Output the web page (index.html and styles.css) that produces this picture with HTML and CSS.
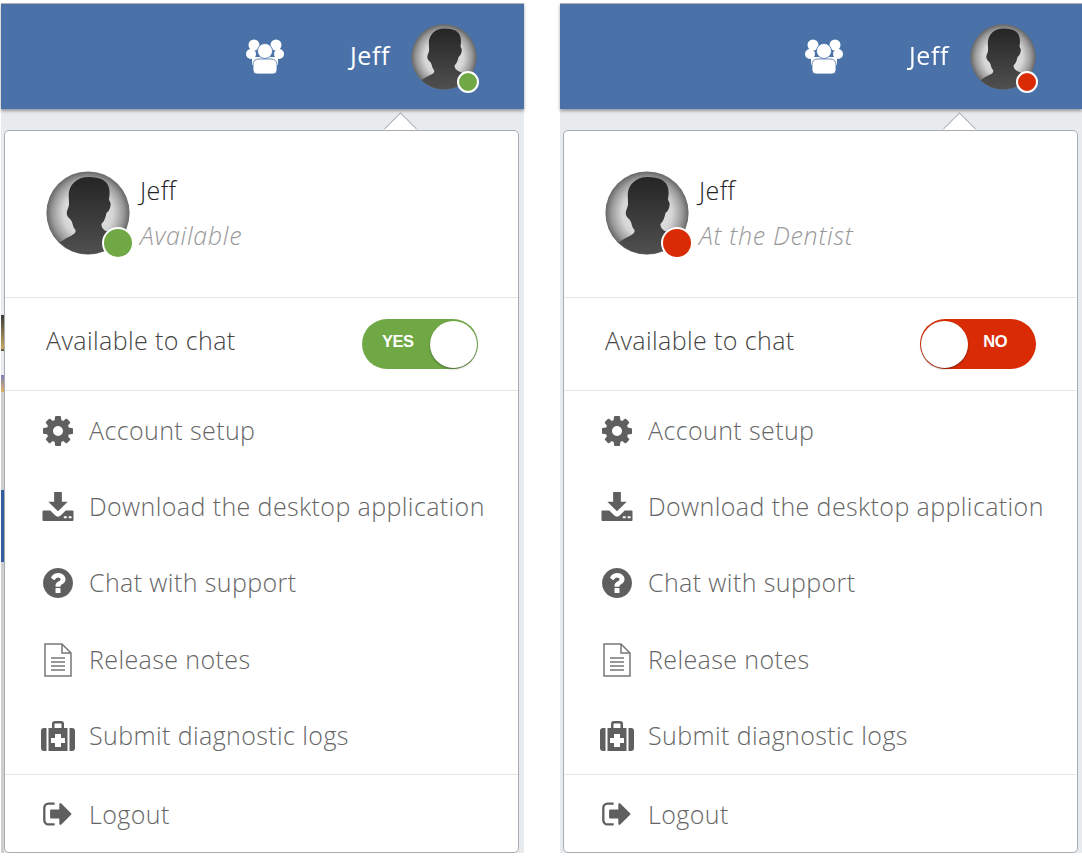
FILE: index.html
```html
<!DOCTYPE html>
<html lang="en">
<head>
  <meta charset="UTF-8" />
  <title>User menu</title>
  <link rel="stylesheet" href="styles.css">
</head>
<body>
  <svg class="defs" width="0" height="0" aria-hidden="true">
    <defs>
      <radialGradient id="avatar-bg" cx="50%" cy="50%" r="50%">
        <stop offset="0" stop-color="#f2f2f2" />
        <stop offset="0.6" stop-color="#d5d5d5" />
        <stop offset="0.85" stop-color="#9a9a9a" />
        <stop offset="1" stop-color="#666" />
      </radialGradient>
      <linearGradient id="avatar-body" x1="0" y1="0" x2="0" y2="1">
        <stop offset="0" stop-color="#252525" />
        <stop offset="1" stop-color="#565656" />
      </linearGradient>
      <clipPath id="avatar-clip"><circle cx="50" cy="50" r="49" /></clipPath>
      <symbol id="avatar" viewBox="0 0 100 100">
        <circle cx="50" cy="50" r="49.500" fill="url(#avatar-bg)" />
        <path clip-path="url(#avatar-clip)" fill="url(#avatar-body)" d="M51 7c-14 0-24 9-24 22 0 5 1 9 0 13-1 4-3 6-2 10 1 4 5 5 6 9 1 4 2 7 4 9 1 3-1 5-5 7-8 4-16 8-19 16l20 20h50l12-30c-5-5-13-8-20-11-5-2-7-5-7-9 4-4 5-8 6-13 3-2 5-6 5-11 0-2-2-3-2-6 1-4 1-9 0-13-2-9-11-13-24-13z" />
      </symbol>
      <symbol id="i-cog" viewBox="128 128 1536 1536">
        <path d="M1152 896q0-106-75-181t-181-75-181 75-75 181 75 181 181 75 181-75 75-181zm512-109v222q0 12-8 23t-20 13l-185 28q-19 54-39 91 35 50 107 138 10 12 10 25t-9 23q-27 37-99 108t-94 71q-12 0-26-9l-138-108q-44 23-91 38-16 136-29 186-7 28-36 28h-222q-14 0-24.500-8.500t-11.500-21.500l-28-184q-49-16-90-37l-141 107q-10 9-25 9-14 0-25-11-126-114-165-168-7-10-7-23 0-12 8-23 15-21 51-66.500t54-70.500q-27-50-41-99l-183-27q-13-2-21-12.500t-8-23.500v-222q0-12 8-23t19-13l186-28q14-46 39-92-40-57-107-138-10-12-10-24 0-10 9-23 26-36 98.500-107.500t94.500-71.500q13 0 26 10l138 107q44-23 91-38 16-136 29-186 7-28 36-28h222q14 0 24.500 8.500t11.500 21.500l28 184q49 16 90 37l142-107q9-9 24-9 13 0 25 10 129 119 165 170 7 8 7 22 0 12-8 23-15 21-51 66.500t-54 70.500q26 50 41 98l183 28q13 2 21 12.500t8 23.500z" />
      </symbol>
      <symbol id="i-download" viewBox="0 0 32 32">
        <path d="M12 1h8v10h6L16 21 6 11h6z" />
        <path d="M1 20h7l5 5q3 3 6 0l5-5h7q1 0 1 1v9q0 1-1 1H1q-1 0-1-1v-9q0-1 1-1zm21 6v2h3v-2zm5 0v2h3v-2z" fill-rule="evenodd" />
      </symbol>
      <symbol id="i-help" viewBox="128 128 1536 1536">
        <path d="M1024 1376v-192q0-14-9-23t-23-9h-192q-14 0-23 9t-9 23v192q0 14 9 23t23 9h192q14 0 23-9t9-23zm256-672q0-88-55.500-163t-138.500-116-170-41q-243 0-371 213-15 24 8 42l132 100q7 6 19 6 16 0 25-12 53-68 86-92 34-24 86-24 48 0 85.500 26t37.500 59q0 38-20 61t-68 45q-63 28-115.500 86.500t-52.500 125.500v36q0 14 9 23t23 9h192q14 0 23-9t9-23q0-19 21.500-49.500t54.500-49.500q32-18 49-28.500t46-35 44.500-48 28-60.500 12.500-81zm384 192q0 209-103 385.500t-279.500 279.500-385.500 103-385.500-103-279.500-279.500-103-385.500 103-385.500 279.500-279.500 385.500-103 385.500 103 279.500 279.500 103 385.500z" />
      </symbol>
      <symbol id="i-file" viewBox="0 0 28 34">
        <path class="line" d="M1 1h17l9 9v23H1zM18 1v9h9" />
        <path class="line" d="M7 15h14M7 19h14M7 23h14M7 27h14" />
      </symbol>
      <symbol id="i-medkit" viewBox="0 0 34 30">
        <path fill-rule="evenodd" d="M11 7V3q0-3 3-3h6q3 0 3 3v4h-2.500V3q0-.5-.5-.5h-6q-.5 0-.5.500v4zM7.500 7h19v23h-19zm6.500 6v4h-4v5h4v4h6v-4h4v-5h-4v-4z" />
        <path d="M5.500 7v23H3q-3 0-3-3V10q0-3 3-3zM28.500 7H31q3 0 3 3v17q0 3-3 3h-2.500z" />
      </symbol>
      <symbol id="i-logout" viewBox="0 128 1664 1536">
        <path d="M704 1440q0 4 1 20t.5 26.500-3 23.500-10 19.500-20.500 6.500h-320q-119 0-203.500-84.500t-84.500-203.500v-704q0-119 84.500-203.500t203.500-84.500h320q13 0 22.500 9.500t9.500 22.500q0 4 1 20t.5 26.500-3 23.500-10 19.500-20.500 6.500h-320q-66 0-113 47t-47 113v704q0 66 47 113t113 47h312l11.500 1 11.500 3 8 5.500 7 9 2 13.500zm928-544q0 26-19 45l-544 544q-19 19-45 19t-45-19-19-45v-288h-448q-26 0-45-19t-19-45v-384q0-26 19-45t45-19h448v-288q0-26 19-45t45-19 45 19l544 544q19 19 19 45z" />
      </symbol>
      <symbol id="i-group" viewBox="0 0 38 36">
        <circle cx="8" cy="7" r="5.500" /><circle cx="30" cy="7" r="5.500" />
        <circle cx="5" cy="16" r="5" /><circle cx="33" cy="16" r="5" />
        <path d="M6 19h26v8H6z" />
        <circle cx="19" cy="13" r="7.500" stroke="#4a72a9" stroke-width="0.800" />
        <path stroke="#4a72a9" stroke-width="0.800" d="M13 21h12q6 0 6 6v5q0 4-4 4H11q-4 0-4-4v-5q0-6 6-6z" />
      </symbol>
    </defs>
  </svg>

  <main class="page">
    <section class="panel panel-first">
      <header class="topbar">
        <svg class="group-icon"><use href="#i-group" /></svg>
        <span class="topbar-name">Jeff</span>
        <div class="avatar avatar-small">
          <svg><use href="#avatar" /></svg>
          <span class="dot dot-small dot-green"></span>
        </div>
      </header>
      <div class="arrow"></div>
      <div class="card">
        <div class="profile">
          <div class="avatar avatar-large">
            <svg><use href="#avatar" /></svg>
            <span class="dot dot-large dot-green"></span>
          </div>
          <div class="profile-text">
            <div class="profile-name">Jeff</div>
            <div class="profile-status">Available</div>
          </div>
        </div>
        <div class="chat-row">
          <span class="chat-label">Available to chat</span>
          <div class="toggle toggle-on">
            <span class="toggle-label">YES</span>
            <span class="knob"></span>
          </div>
        </div>
        <ul class="menu">
          <li><span class="icon-slot"><svg class="icon icon-cog"><use href="#i-cog" /></svg></span>Account setup</li>
          <li><span class="icon-slot"><svg class="icon icon-download"><use href="#i-download" /></svg></span>Download the desktop application</li>
          <li><span class="icon-slot"><svg class="icon icon-help"><use href="#i-help" /></svg></span>Chat with support</li>
          <li><span class="icon-slot"><svg class="icon icon-file"><use href="#i-file" /></svg></span>Release notes</li>
          <li><span class="icon-slot"><svg class="icon icon-medkit"><use href="#i-medkit" /></svg></span>Submit diagnostic logs</li>
        </ul>
        <div class="logout">
          <span class="icon-slot"><svg class="icon icon-logout"><use href="#i-logout" /></svg></span>Logout
        </div>
      </div>
    </section>

    <section class="panel">
      <header class="topbar">
        <svg class="group-icon"><use href="#i-group" /></svg>
        <span class="topbar-name">Jeff</span>
        <div class="avatar avatar-small">
          <svg><use href="#avatar" /></svg>
          <span class="dot dot-small dot-red"></span>
        </div>
      </header>
      <div class="arrow"></div>
      <div class="card">
        <div class="profile">
          <div class="avatar avatar-large">
            <svg><use href="#avatar" /></svg>
            <span class="dot dot-large dot-red"></span>
          </div>
          <div class="profile-text">
            <div class="profile-name">Jeff</div>
            <div class="profile-status">At the Dentist</div>
          </div>
        </div>
        <div class="chat-row">
          <span class="chat-label">Available to chat</span>
          <div class="toggle toggle-off">
            <span class="knob"></span>
            <span class="toggle-label">NO</span>
          </div>
        </div>
        <ul class="menu">
          <li><span class="icon-slot"><svg class="icon icon-cog"><use href="#i-cog" /></svg></span>Account setup</li>
          <li><span class="icon-slot"><svg class="icon icon-download"><use href="#i-download" /></svg></span>Download the desktop application</li>
          <li><span class="icon-slot"><svg class="icon icon-help"><use href="#i-help" /></svg></span>Chat with support</li>
          <li><span class="icon-slot"><svg class="icon icon-file"><use href="#i-file" /></svg></span>Release notes</li>
          <li><span class="icon-slot"><svg class="icon icon-medkit"><use href="#i-medkit" /></svg></span>Submit diagnostic logs</li>
        </ul>
        <div class="logout">
          <span class="icon-slot"><svg class="icon icon-logout"><use href="#i-logout" /></svg></span>Logout
        </div>
      </div>
    </section>
  </main>
</body>
</html>
```

FILE: styles.css
```css
html, body {
  margin: 0;
  height: 100%;
  overflow: hidden;
  background: #fff;
}
body {
  font-family: "Open Sans", sans-serif;
  font-weight: 300;
  font-size: 25px;
  letter-spacing: 0.4px;
  color: #666;
}
.defs {
  display: block;
}
.page {
  display: grid;
  grid-template-columns: 523px 522px;
  column-gap: 36px;
  padding: 3px 0 0 1px;
  filter: blur(0.7px);
}
.panel {
  position: relative;
  background: #e8ebee;
  height: 850px;
}
/* bits of the page behind the dropdown, showing at its left edge */
.panel-first {
  background:
    linear-gradient(to bottom,
      transparent 312px, #3a3a3a 312px, #c9a860 345px, #3a3a3a 348px, transparent 348px,
      transparent 372px, #7c7fb8 372px, #e0b060 389px, transparent 389px,
      #cfcfcf 389px, #cfcfcf 487px, #2f5d9e 487px, #2f5d9e 559px, #cfcfcf 559px) 0 0 / 3px 100% no-repeat,
    #e8ebee;
}
.topbar {
  display: flex;
  align-items: center;
  height: 105px;
  padding-left: 245px;
  background: #4a72a9;
  border-top: 1px solid #aeb1b5;
  box-shadow: 0 2px 3px rgba(0, 0, 0, 0.35);
  position: relative;
}
.group-icon {
  width: 38px;
  height: 36px;
  fill: #fff;
  margin-top: -1px;
}
.topbar-name {
  width: 40px;
  margin-left: 66px;
  margin-right: 21px;
  margin-top: -4px;
  color: #fff;
  font-weight: 400;
  letter-spacing: 0.6px;
}
.avatar {
  position: relative;
  flex: none;
}
.avatar svg {
  display: block;
  width: 100%;
  height: 100%;
}
.avatar-small {
  width: 66px;
  height: 66px;
}
.avatar-large {
  width: 84px;
  height: 84px;
}
.dot {
  position: absolute;
  box-sizing: border-box;
  border-radius: 50%;
  border: 2px solid #fff;
}
.dot-small {
  width: 22px;
  height: 22px;
  right: -2px;
  bottom: -3px;
}
.dot-large {
  width: 32px;
  height: 32px;
  right: -4px;
  bottom: -4px;
}
.dot-green {
  background: #6fa844;
}
.dot-red {
  background: #d92b06;
}
.arrow {
  position: absolute;
  left: 388px;
  top: 114px;
  width: 22px;
  height: 22px;
  background: #fff;
  border-left: 1px solid #a9adb1;
  border-top: 1px solid #a9adb1;
  transform: rotate(45deg);
}
.card {
  position: relative;
  box-sizing: border-box;
  width: 515px;
  height: 723px;
  margin: 21px 0 0 3px;
  background: #fff;
  border: 1px solid #a9adb1;
  border-radius: 5px;
}
.profile {
  display: flex;
  height: 167px;
  box-sizing: border-box;
  padding: 40px 0 0 41px;
  border-bottom: 1px solid #e6e6e6;
}
.profile-text {
  margin-left: 10px;
}
.profile-name {
  color: #222;
  line-height: 32px;
  margin-top: 3px;
}
.profile-status {
  margin-top: 13px;
  line-height: 32px;
  font-style: italic;
  letter-spacing: 0.7px;
  color: #999;
}
.chat-row {
  display: flex;
  align-items: center;
  justify-content: space-between;
  box-sizing: border-box;
  height: 93px;
  padding: 0 40px 0 41px;
  border-bottom: 1px solid #e6e6e6;
}
.chat-label {
  color: #444;
  margin-bottom: 8px;
}
.toggle {
  display: flex;
  align-items: center;
  justify-content: space-between;
  box-sizing: border-box;
  width: 116px;
  height: 50px;
  padding: 0 1px;
  border-radius: 25px;
  color: #fff;
}
.toggle-on {
  background: #6fa844;
  padding-left: 20px;
}
.toggle-off {
  background: #d92b06;
  margin-right: 1px;
  padding-right: 29px;
}
.toggle-label {
  font-family: "Liberation Sans", sans-serif;
  font-size: 16.500px;
  font-weight: 700;
  letter-spacing: -0.5px;
  margin-top: -5px;
}
.knob {
  width: 47px;
  height: 47px;
  background: #fff;
  border-radius: 50%;
  box-shadow: 0 1px 2px rgba(0, 0, 0, 0.4);
}
.menu {
  list-style: none;
  margin: 0;
  padding: 2px 0 0;
  height: 384px;
  box-sizing: border-box;
  border-bottom: 1px solid #e6e6e6;
}
.menu li {
  display: flex;
  align-items: center;
  height: 76.300px;
  padding-left: 33px;
  padding-bottom: 3px;
  box-sizing: border-box;
}
.menu .icon-slot {
  margin-top: 2px;
}
.logout {
  display: flex;
  align-items: center;
  height: 77px;
  padding-left: 33px;
}
.icon-slot {
  display: flex;
  flex: none;
  justify-content: center;
  width: 40px;
  margin-right: 11px;
}
.icon {
  fill: #5f5f5f;
}
.icon-cog, .icon-help {
  width: 30px;
  height: 30px;
}
.icon-download {
  width: 32px;
  height: 31px;
}
.icon-file {
  width: 28px;
  height: 34px;
}
.icon-medkit {
  width: 34px;
  height: 30px;
}
.icon-logout {
  width: 30px;
  height: 28px;
  margin-left: -3px;
}
.line {
  fill: none;
  stroke: #777;
  stroke-width: 1.500;
}
```
